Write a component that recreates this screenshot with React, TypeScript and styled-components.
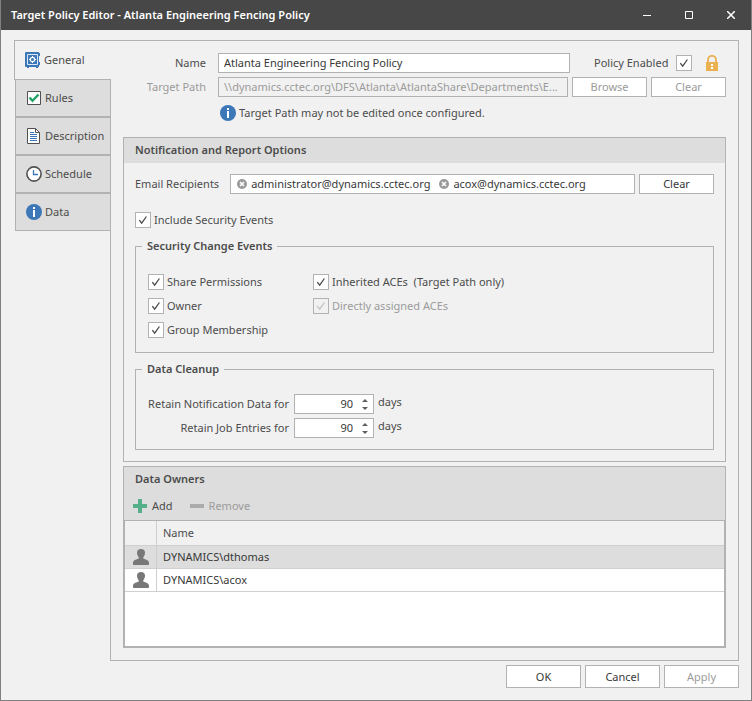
import React, { useState } from 'react';
import styled, { createGlobalStyle, css } from 'styled-components';

const color = {
  titleBar: '#474747',
  frame: '#808080',
  surface: '#f1f1f1',
  header: '#dddddd',
  line: '#b2b2b2',
  gridLine: '#cfcfcf',
  text: '#4c4c4c',
  value: '#383838',
  muted: '#9b9b9b',
  blue: '#3c78b8',
  green: '#21a366',
  amber: '#eab052',
};

const GlobalStyle = createGlobalStyle`
  *, *::before, *::after { box-sizing: border-box; }
  body { margin: 0; background: ${color.surface}; }
  body, button, input {
    font-family: "Noto Sans", "Open Sans", sans-serif;
    font-size: 11px;
    line-height: 16px;
    color: ${color.text};
  }
  button { cursor: pointer; }
  button:disabled { cursor: default; }
  svg { display: block; flex: none; }
`;

const Window = styled.div`
  display: flex;
  flex-direction: column;
  min-height: 100vh;
  border: solid ${color.frame};
  border-width: 0 1px 1px;
  background: ${color.surface};
`;

const TitleBar = styled.header`
  display: flex;
  align-items: center;
  justify-content: space-between;
  height: 30px;
  padding-left: 10px;
  background: ${color.titleBar};
`;

const Title = styled.h1`
  margin: 0;
  font-size: 11px;
  line-height: 16px;
  font-weight: 600;
  color: #fff;
`;

const WindowControls = styled.div`
  display: flex;
  gap: 2px;
`;

const WindowButton = styled.button`
  display: grid;
  place-items: center;
  width: 40px;
  height: 30px;
  padding: 0;
  border: 0;
  background: transparent;
  color: #fff;
`;

const Workspace = styled.main`
  display: flex;
  flex: 1;
  padding: 10px 12px 0 13px;
`;

const Tabs = styled.nav`
  position: relative;
  display: flex;
  flex-direction: column;
  align-items: flex-end;
  width: 97px;
  margin-right: -1px;
  flex: none;
`;

const Tab = styled.button<{ $active?: boolean }>`
  display: flex;
  align-items: center;
  gap: 3px;
  width: 96px;
  height: 38px;
  padding: 0 0 0 10px;
  border: solid ${color.line};
  border-width: 0 1px 2px 1px;
  background: ${color.header};
  &:last-child {
    height: 37px;
    border-bottom-width: 1px;
  }
  ${(p) =>
    p.$active &&
    css`
      width: 97px;
      height: 40px;
      border-width: 1px 0 1px 1px;
      background: ${color.surface};
    `}
`;

const Page = styled.section`
  display: flex;
  flex-direction: column;
  flex: 1;
  min-width: 0;
  padding: 12px;
  border: 1px solid ${color.line};
`;

const Form = styled.div`
  display: flex;
  flex-direction: column;
  gap: 4px;
`;

const FormRow = styled.div`
  display: flex;
  align-items: center;
  gap: 4px;
`;

const FieldLabel = styled.label<{ $muted?: boolean; $width: number }>`
  flex: none;
  min-width: ${(p) => p.$width}px;
  text-align: right;
  white-space: nowrap;
  color: ${(p) => (p.$muted ? color.muted : color.text)};
`;

const boxed = css`
  height: 20px;
  border: 1px solid ${color.line};
  background: #fff;
`;

const TextInput = styled.input`
  ${boxed}
  flex: 1;
  min-width: 0;
  margin-left: 8px;
  padding: 0 5px 1px;
  color: ${color.value};
  text-overflow: ellipsis;
  &:disabled {
    background: ${color.surface};
    color: ${color.muted};
  }
`;

const PolicyState = styled.div`
  display: flex;
  align-items: center;
  justify-content: space-between;
  width: 132px;
  margin-left: 20px;
  padding-right: 8px;
`;

const Button = styled.button<{ $tall?: boolean }>`
  ${boxed}
  flex: none;
  width: 75px;
  height: ${(p) => (p.$tall ? 23 : 20)}px;
  padding: 0;
  color: ${color.value};
  &:disabled { color: ${color.muted}; }
`;

const Hint = styled.p`
  display: flex;
  align-items: center;
  gap: 3px;
  margin: 4px 0 0 97px;
`;

const Group = styled.section`
  margin-top: 16px;
  border: 1px solid ${color.line};
`;

const GroupTitle = styled.h2`
  margin: 0;
  padding: 4px 11px 5px;
  background: ${color.header};
  font-size: 11px;
  line-height: 16px;
  font-weight: 600;
`;

const GroupBody = styled.div`
  padding: 11px;
`;

const Recipients = styled.div`
  ${boxed}
  display: flex;
  align-items: center;
  flex: 1;
  min-width: 0;
  gap: 9px;
  margin-left: 7px;
  padding: 0 6px;
  color: ${color.value};
`;

const Chip = styled.span`
  display: flex;
  align-items: center;
  gap: 4px;
`;

const ChipRemove = styled.button`
  padding: 0;
  border: 0;
  background: transparent;
`;

const CheckLabel = styled.label<{ $muted?: boolean; $reverse?: boolean }>`
  display: inline-flex;
  flex-direction: ${(p) => (p.$reverse ? 'row-reverse' : 'row')};
  align-items: center;
  gap: ${(p) => (p.$reverse ? 8 : 3)}px;
  white-space: pre;
  color: ${(p) => (p.$muted ? color.muted : color.text)};
`;

const CheckHolder = styled.span`
  display: grid;
  place-items: center;
  > * { grid-area: 1 / 1; }
  > svg { pointer-events: none; visibility: hidden; }
  > input:checked + svg { visibility: visible; }
`;

const CheckInput = styled.input`
  appearance: none;
  width: 16px;
  height: 16px;
  margin: 0;
  border: 1px solid ${color.line};
  background: #fff;
  &:disabled { background: ${color.surface}; }
`;

const Include = styled.div`
  display: flex;
  margin: 18px 0 10px;
`;

const Fieldset = styled.fieldset`
  min-width: 0;
  margin: 0;
  padding: 0 6px;
  border: 1px solid ${color.line};
  & + & { margin-top: 8px; }
`;

const Legend = styled.legend`
  padding: 0 5px;
  font-weight: 600;
`;

const EventGrid = styled.div`
  display: grid;
  grid-template-columns: 165px 1fr;
  gap: 8px 0;
  padding: 20px 6px 14px;
`;

const CleanupRows = styled.div`
  display: flex;
  flex-direction: column;
  gap: 4px;
  padding: 17px 0 11px;
`;

const Spinner = styled.div`
  ${boxed}
  display: flex;
  align-items: center;
  width: 80px;
  margin-left: 1px;
`;

const SpinnerInput = styled.input`
  appearance: textfield;
  flex: 1;
  min-width: 0;
  padding: 0;
  border: 0;
  background: transparent;
  text-align: right;
  color: ${color.value};
  &::-webkit-inner-spin-button { appearance: none; }
`;

const SpinnerButtons = styled.div`
  display: flex;
  flex-direction: column;
  width: 16px;
  margin-left: 4px;
`;

const SpinnerButton = styled.button`
  display: grid;
  place-items: center;
  height: 8px;
  padding: 0;
  border: 0;
  background: transparent;
`;

const Unit = styled.span`
  align-self: flex-start;
`;

const OwnersGroup = styled(Group)`
  display: flex;
  flex-direction: column;
  flex: 1;
  margin-top: 4px;
  background: ${color.header};
`;

const ToolBar = styled.div`
  display: flex;
  align-items: center;
  gap: 17px;
  padding: 6px 9px;
`;

const ToolButton = styled.button`
  display: flex;
  align-items: center;
  gap: 5px;
  padding: 0;
  border: 0;
  background: transparent;
  &:disabled { color: ${color.muted}; }
`;

const GridBox = styled.div`
  flex: 1;
  min-height: 100px;
  border: 1px solid ${color.line};
  background: #fff;
`;

const OwnerTable = styled.table`
  width: 100%;
  border-collapse: separate;
  border-spacing: 0;
`;

const cell = css`
  border-bottom: 1px solid ${color.gridLine};
`;

const OwnerRow = styled.tr<{ $selected?: boolean }>`
  height: 23px;
  background: ${(p) => (p.$selected ? color.header : '#fff')};
  color: ${color.value};
`;

const HeadRow = styled(OwnerRow)`
  height: 25px;
  background: ${color.surface};
  color: ${color.text};
`;

const IconCell = styled.td`
  ${cell}
  width: 32px;
  padding: 0 0 0 8px;
  border-right: 1px solid ${color.gridLine};
`;

const NameCell = styled.td`
  ${cell}
  padding: 0 6px;
`;

const NameHead = styled.th`
  ${cell}
  padding: 0 6px;
  font-weight: 400;
  text-align: left;
`;

const Footer = styled.footer`
  display: flex;
  justify-content: flex-end;
  gap: 4px;
  padding: 4px 12px 12px;
`;

const SafeIcon = () => (
  <svg width="16" height="16" viewBox="0 0 16 16" aria-hidden="true">
    <path d="M1 0h13v1h1v3h-1v6h1v3h-1v2h-1v1h-2v-1H4v1H2v-1H1a1 1 0 0 1-1-1V1a1 1 0 0 1 1-1z" fill={color.blue} />
    <path d="M2.5 2.500h10v10h-10z" fill="none" stroke="#dbe8f5" />
    <circle cx="7.5" cy="7.500" r="2.200" fill="none" stroke="#fff" strokeWidth="1.200" />
    <path d="M7 4h1v1H7zM7 10h1v1H7zM4 7h1v1H4zM10 7h1v1h-1z" fill="#fff" />
  </svg>
);

const RulesIcon = () => (
  <svg width="16" height="16" viewBox="0 0 16 16" aria-hidden="true">
    <path d="M1.500 1.500h13v13h-13z" fill="#fff" stroke="#505050" />
    <path d="M3.500 7.500l3 3.300 6-6.300" fill="none" stroke={color.green} strokeWidth="2.400" />
  </svg>
);

const DocumentIcon = () => (
  <svg width="16" height="16" viewBox="0 0 16 16" aria-hidden="true">
    <path d="M1.500.500h8l4 4v11h-12z" fill="#fff" stroke="#505050" />
    <path d="M9.500.500v4h4" fill="none" stroke="#505050" />
    <path d="M4 4.500h4M4 6.500h7M4 8.500h7M4 10.500h7M4 12.500h7" stroke={color.blue} />
  </svg>
);

const ClockIcon = () => (
  <svg width="16" height="16" viewBox="0 0 16 16" aria-hidden="true">
    <circle cx="8" cy="8" r="7.100" fill="#fff" stroke="#505050" strokeWidth="1.600" />
    <path d="M7.500 4v4.500H12" fill="none" stroke={color.blue} strokeWidth="1.300" />
  </svg>
);

const InfoIcon = () => (
  <svg width="16" height="16" viewBox="0 0 16 16" aria-hidden="true">
    <circle cx="8" cy="8" r="8" fill={color.blue} />
    <path d="M7 3h2v2H7zM7 6h2v7H7z" fill="#fff" />
  </svg>
);

const LockIcon = () => (
  <svg width="12" height="16" viewBox="0 0 12 16" role="img" aria-label="Locked">
    <path d="M2 8V4.800a4 4 0 0 1 8 0V8" fill="none" stroke={color.amber} strokeWidth="1.800" />
    <path d="M0 7h12v9H0z" fill={color.amber} />
    <path d="M5 9h2v2H5zM5 12h2v2H5z" fill="#fff" />
  </svg>
);

const TickIcon = ({ muted }: { muted?: boolean }) => (
  <svg width="10" height="10" viewBox="0 0 10 10" aria-hidden="true">
    <path d="M1.300 5.200l2.400 3L8.400 1.500" fill="none" stroke={muted ? '#c2c2c2' : '#484848'} strokeWidth="1.300" />
  </svg>
);

const RemoveIcon = () => (
  <svg width="10" height="10" viewBox="0 0 10 10" aria-hidden="true">
    <circle cx="5" cy="5" r="5" fill="#999" />
    <path d="M3 3l4 4M7 3L3 7" stroke="#fff" strokeWidth="1.600" />
  </svg>
);

const PlusIcon = () => (
  <svg width="14" height="14" viewBox="0 0 14 14" aria-hidden="true">
    <path d="M5 0h4v5h5v4H9v5H5V9H0V5h5z" fill="#55b08a" />
  </svg>
);

const MinusIcon = () => (
  <svg width="14" height="14" viewBox="0 0 14 14" aria-hidden="true">
    <path d="M0 5h14v4H0z" fill="#ababab" />
  </svg>
);

const PersonIcon = () => (
  <svg width="16" height="16" viewBox="0 0 16 16" aria-hidden="true">
    <path
      d="M8 0c2.500 0 4 1.400 4 3.600 0 2.200-.8 3.600-1.700 4.600v1.200c1.200.8 5.700 1.200 5.700 4.200V15c0 .6-.4 1-1 1H1c-.6 0-1-.4-1-1v-1.400c0-3 4.500-3.400 5.700-4.200V8.200C4.800 7.200 4 5.800 4 3.600 4 1.400 5.500 0 8 0z"
      fill="#787878"
    />
  </svg>
);

const ArrowIcon = ({ down }: { down?: boolean }) => (
  <svg width="6" height="3" viewBox="0 0 6 3" aria-hidden="true">
    <path d={down ? 'M0 0h6L3 3z' : 'M0 3h6L3 0z'} fill="#606060" />
  </svg>
);

type CheckProps = { label: string; disabled?: boolean; reverse?: boolean };

const Check = ({ label, disabled, reverse }: CheckProps) => (
  <CheckLabel $muted={disabled} $reverse={reverse}>
    <CheckHolder>
      <CheckInput type="checkbox" defaultChecked disabled={disabled} />
      <TickIcon muted={disabled} />
    </CheckHolder>
    {label}
  </CheckLabel>
);

const RetainRow = ({ id, label }: { id: string; label: string }) => {
  const [days, setDays] = useState(90);
  return (
    <FormRow>
      <FieldLabel htmlFor={id} $width={147}>{label}</FieldLabel>
      <Spinner>
        <SpinnerInput id={id} type="number" value={days} onChange={(e) => setDays(Number(e.target.value))} />
        <SpinnerButtons>
          <SpinnerButton type="button" aria-label="Increase" onClick={() => setDays(days + 1)}>
            <ArrowIcon />
          </SpinnerButton>
          <SpinnerButton type="button" aria-label="Decrease" onClick={() => setDays(Math.max(0, days - 1))}>
            <ArrowIcon down />
          </SpinnerButton>
        </SpinnerButtons>
      </Spinner>
      <Unit>days</Unit>
    </FormRow>
  );
};

const tabs = [
  { name: 'General', Icon: SafeIcon },
  { name: 'Rules', Icon: RulesIcon },
  { name: 'Description', Icon: DocumentIcon },
  { name: 'Schedule', Icon: ClockIcon },
  { name: 'Data', Icon: InfoIcon },
];

const owners = ['DYNAMICS\\dthomas', 'DYNAMICS\\acox'];

export default function App() {
  const [recipients, setRecipients] = useState(['administrator@dynamics.cctec.org', 'acox@dynamics.cctec.org']);
  const [selected, setSelected] = useState(0);

  return (
    <Window>
      <GlobalStyle />
      <TitleBar>
        <Title>Target Policy Editor - Atlanta Engineering Fencing Policy</Title>
        <WindowControls>
          <WindowButton type="button" aria-label="Minimize">
            <svg width="8" height="8" viewBox="0 0 8 8"><path d="M0 4.500h8" stroke="currentColor" /></svg>
          </WindowButton>
          <WindowButton type="button" aria-label="Maximize">
            <svg width="8" height="8" viewBox="0 0 8 8"><path d="M.500.500h7v7h-7z" fill="none" stroke="currentColor" /></svg>
          </WindowButton>
          <WindowButton type="button" aria-label="Close">
            <svg width="8" height="8" viewBox="0 0 8 8"><path d="M0 0l8 8M8 0L0 8" stroke="currentColor" strokeWidth="1.500" /></svg>
          </WindowButton>
        </WindowControls>
      </TitleBar>

      <Workspace>
        <Tabs>
          {tabs.map(({ name, Icon }, i) => (
            <Tab key={name} type="button" $active={i === 0} aria-current={i === 0 ? 'page' : undefined}>
              <Icon />
              {name}
            </Tab>
          ))}
        </Tabs>

        <Page>
          <Form>
            <FormRow>
              <FieldLabel htmlFor="name" $width={83}>Name</FieldLabel>
              <TextInput id="name" defaultValue="Atlanta Engineering Fencing Policy" />
              <PolicyState>
                <Check label="Policy Enabled" reverse />
                <LockIcon />
              </PolicyState>
            </FormRow>
            <FormRow>
              <FieldLabel htmlFor="path" $width={83} $muted>Target Path</FieldLabel>
              <TextInput id="path" disabled value="\\dynamics.cctec.org\DFS\Atlanta\AtlantaShare\Departments\E..." readOnly />
              <Button type="button" disabled>Browse</Button>
              <Button type="button" disabled>Clear</Button>
            </FormRow>
            <Hint>
              <InfoIcon />
              Target Path may not be edited once configured.
            </Hint>
          </Form>

          <Group>
            <GroupTitle>Notification and Report Options</GroupTitle>
            <GroupBody>
              <FormRow>
                <FieldLabel as="span" $width={84}>Email Recipients</FieldLabel>
                <Recipients role="group" aria-label="Email Recipients">
                  {recipients.map((r) => (
                    <Chip key={r}>
                      <ChipRemove
                        type="button"
                        aria-label={`Remove ${r}`}
                        onClick={() => setRecipients(recipients.filter((x) => x !== r))}
                      >
                        <RemoveIcon />
                      </ChipRemove>
                      {r}
                    </Chip>
                  ))}
                </Recipients>
                <Button type="button" onClick={() => setRecipients([])}>Clear</Button>
              </FormRow>
              <Include>
                <Check label="Include Security Events" />
              </Include>
              <Fieldset>
                <Legend>Security Change Events</Legend>
                <EventGrid>
                  <Check label="Share Permissions" />
                  <Check label="Inherited ACEs  (Target Path only)" />
                  <Check label="Owner" />
                  <Check label="Directly assigned ACEs" disabled />
                  <Check label="Group Membership" />
                </EventGrid>
              </Fieldset>
              <Fieldset>
                <Legend>Data Cleanup</Legend>
                <CleanupRows>
                  <RetainRow id="retain-notifications" label="Retain Notification Data for" />
                  <RetainRow id="retain-jobs" label="Retain Job Entries for" />
                </CleanupRows>
              </Fieldset>
            </GroupBody>
          </Group>

          <OwnersGroup>
            <GroupTitle>Data Owners</GroupTitle>
            <ToolBar>
              <ToolButton type="button"><PlusIcon />Add</ToolButton>
              <ToolButton type="button" disabled><MinusIcon />Remove</ToolButton>
            </ToolBar>
            <GridBox>
              <OwnerTable>
                <thead>
                  <HeadRow>
                    <IconCell />
                    <NameHead scope="col">Name</NameHead>
                  </HeadRow>
                </thead>
                <tbody>
                  {owners.map((o, i) => (
                    <OwnerRow key={o} $selected={i === selected} onClick={() => setSelected(i)}>
                      <IconCell><PersonIcon /></IconCell>
                      <NameCell>{o}</NameCell>
                    </OwnerRow>
                  ))}
                </tbody>
              </OwnerTable>
            </GridBox>
          </OwnersGroup>
        </Page>
      </Workspace>

      <Footer>
        <Button type="button" $tall>OK</Button>
        <Button type="button" $tall>Cancel</Button>
        <Button type="button" $tall disabled>Apply</Button>
      </Footer>
    </Window>
  );
}
